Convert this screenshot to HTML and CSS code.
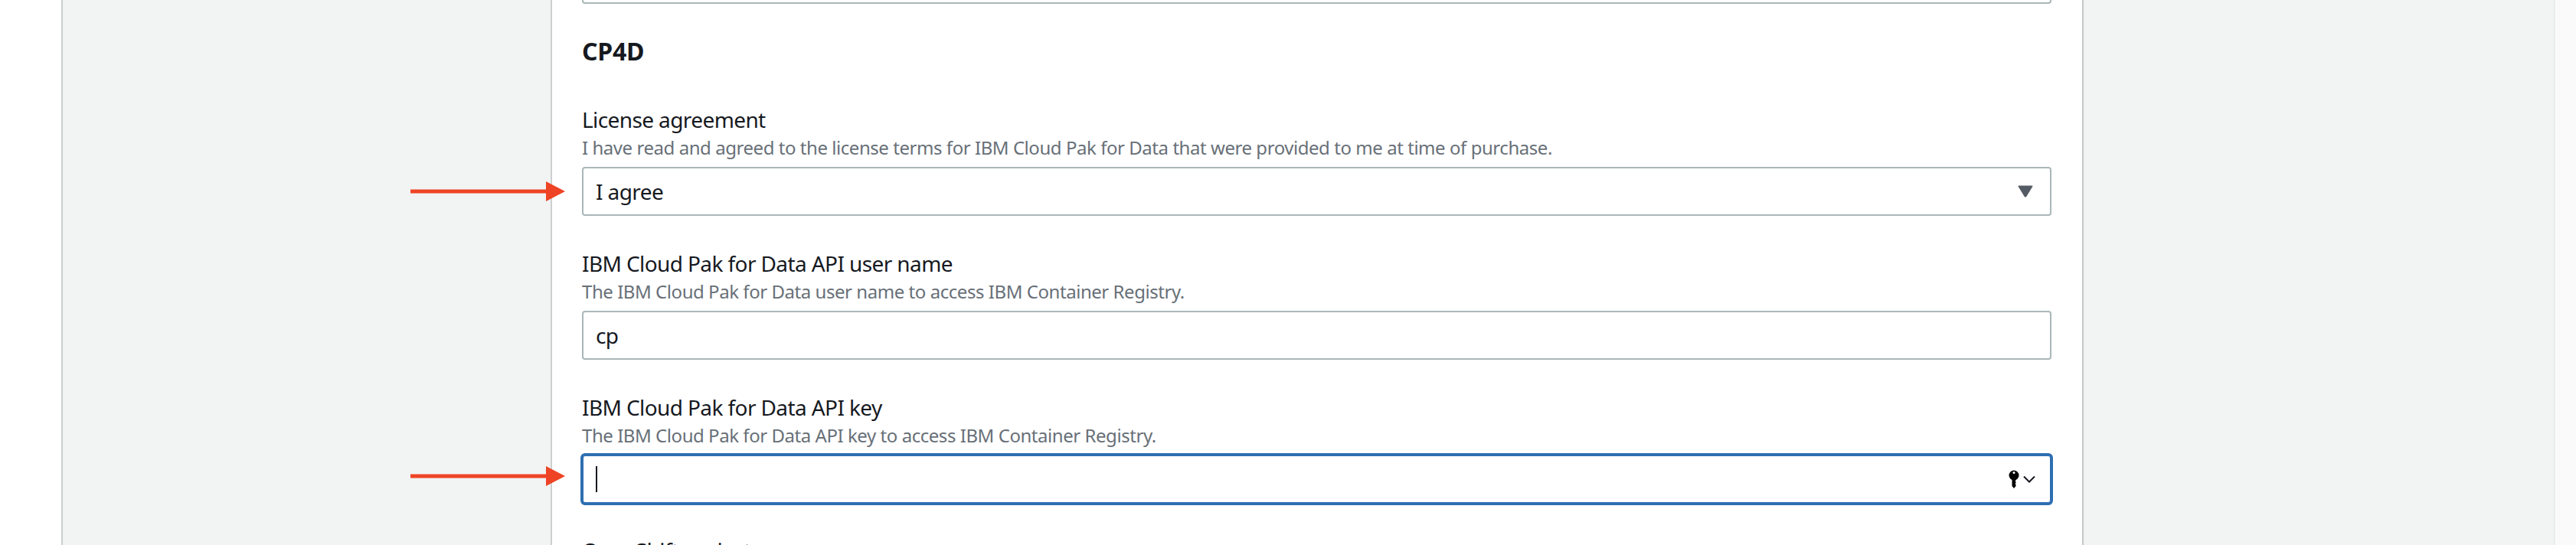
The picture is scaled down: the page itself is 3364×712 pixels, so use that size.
FILE: index.html
```html
<!DOCTYPE html>
<html lang="en">
<head>
<meta charset="utf-8">
<title>CP4D parameters</title>
<link rel="stylesheet" href="styles.css">
</head>
<body>
<div class="page">
  <div class="gutter"></div>
  <main class="panel">
    <section class="card">
      <div class="stub"></div>
      <h2 class="heading">CP4D</h2>
      <div class="field">
        <div class="label">License agreement</div>
        <div class="desc">I have read and agreed to the license terms for IBM Cloud Pak for Data that were provided to me at time of purchase.</div>
        <div class="control">
          <span class="value">I agree</span>
          <svg class="caret-down" width="20" height="16" viewBox="0 0 20 16"><path d="M1.5 0.5h17q1.4 0 .8 1.3L11.2 15q-1.2 1.2-2.4 0L.7 1.8q-.6-1.3.8-1.3z" fill="#545b64"/></svg>
        </div>
      </div>
      <div class="field">
        <div class="label">IBM Cloud Pak for Data API user name</div>
        <div class="desc">The IBM Cloud Pak for Data user name to access IBM Container Registry.</div>
        <div class="control"><span class="value">cp</span></div>
      </div>
      <div class="field field-last">
        <div class="label">IBM Cloud Pak for Data API key</div>
        <div class="desc">The IBM Cloud Pak for Data API key to access IBM Container Registry.</div>
        <div class="control focused">
          <span class="text-caret"></span>
          <span class="key-group">
            <svg width="14" height="25" viewBox="0 0 14 25"><circle cx="7" cy="7" r="6.5" fill="#000"/><circle cx="7" cy="3.6" r="1.5" fill="#fff"/><path d="M4.500 11h5v2.500l-1 1 1 1v1.500l-1 1 1 1v2l-2.500 3-2.500-3z" fill="#000"/></svg>
            <svg width="16" height="10" viewBox="0 0 16 10"><path d="M1 1.500l7 7 7-7" fill="none" stroke="#16191f" stroke-width="2"/></svg>
          </span>
        </div>
      </div>
      <div class="label">OpenShift project</div>
    </section>
  </main>
  <div class="strip"></div>
</div>
<svg class="arrow arrow-one" width="202" height="26" viewBox="0 0 202 26"><path d="M0 10.500h177V0l25 13-25 13V15.500H0z" fill="#ee4425"/></svg>
<svg class="arrow arrow-two" width="202" height="26" viewBox="0 0 202 26"><path d="M0 10.500h177V0l25 13-25 13V15.500H0z" fill="#ee4425"/></svg>
</body>
</html>
```
FILE: styles.css
```css
* { box-sizing: border-box; }
html, body { margin: 0; padding: 0; height: 712px; overflow: hidden; background: #fff; }
body { position: relative; font-family: "Noto Sans", "Liberation Sans", sans-serif; color: #16191f; }
.page { display: flex; width: 3364px; height: 712px; overflow: hidden; }
.gutter { width: 80px; background: #fff; flex: none; }
.panel { flex: 1; display: flex; justify-content: flex-start; background: #f2f3f3; border-left: 2px solid #ccd0d0; padding-left: 637px; }
.card { width: 2002px; flex: none; height: 712px; overflow: hidden; background: #fff; border-left: 2px solid #ccd0d0; border-right: 2px solid #c4c8c8; padding: 0 40px 0 39px; }
.strip { width: 29px; flex: none; background: #fafafa; border-left: 2px solid #eaeded; }
.stub { height: 5px; border: 2px solid #aab7b8; border-top: 0; border-radius: 0 0 4px 4px; }
.heading { margin: 42px 0 50px; font-size: 32px; line-height: 40px; font-weight: 700; letter-spacing: -0.2px; }
.field { margin-bottom: 43px; }
.field-last { margin-bottom: 42px; }
.label { font-size: 28px; line-height: 38px; margin-bottom: 2px; letter-spacing: -0.6px; }
.desc { font-size: 24px; line-height: 32px; margin-bottom: 9px; color: #687078; letter-spacing: -0.45px; }
.control { display: flex; align-items: center; justify-content: space-between; height: 64px; padding: 0 16px; border: 2px solid #aab7b8; border-radius: 4px; background: #fff; font-size: 28px; letter-spacing: -0.6px; }
.focused { border-color: #2e6fb2; box-shadow: 0 0 0 2px #2e6fb2; }
.text-caret { width: 2px; height: 34px; background: #16191f; }
.key-group { display: flex; align-items: center; gap: 5px; margin-right: 3px; }
.caret-down { margin-right: 6px; }
.arrow { position: absolute; left: 536px; }
.arrow-one { top: 237px; }
.arrow-two { top: 609px; }
```
